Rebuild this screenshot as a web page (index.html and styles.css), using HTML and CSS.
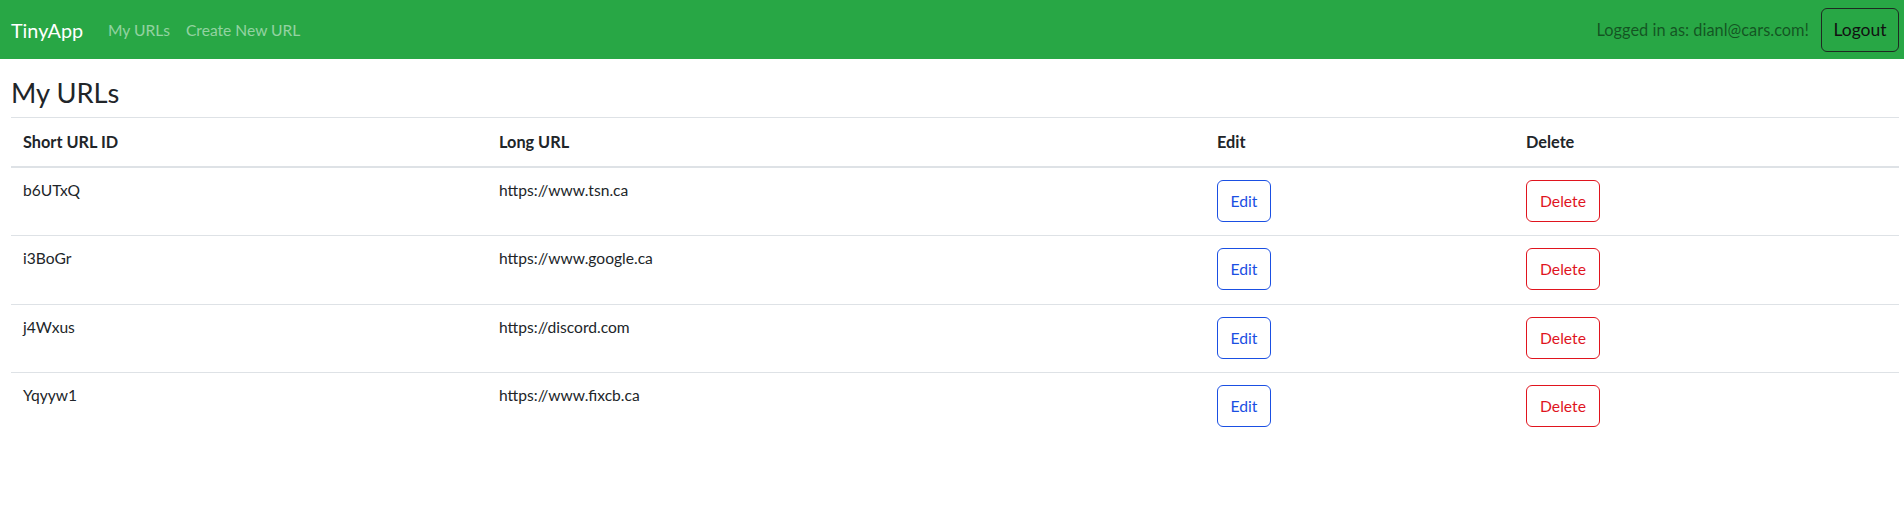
FILE: index.html
```html
<!DOCTYPE html>
<html lang="en">
<head>
<meta charset="utf-8">
<title>TinyApp</title>
<link rel="stylesheet" href="styles.css">
</head>
<body>
<nav class="navbar">
  <a class="brand" href="#">TinyApp</a>
  <ul class="nav">
    <li><a class="nav-link" href="#">My URLs</a></li>
    <li><a class="nav-link" href="#">Create New URL</a></li>
  </ul>
  <div class="user">
    <span class="logged">Logged in as: dianl@cars.com!</span>
    <button class="btn-logout" type="button">Logout</button>
  </div>
</nav>
<main class="content">
  <h3 class="title">My URLs</h3>
  <table class="url-table">
    <colgroup>
      <col class="c1"><col class="c2"><col class="c3"><col class="c4">
    </colgroup>
    <thead>
      <tr><th>Short URL ID</th><th>Long URL</th><th>Edit</th><th>Delete</th></tr>
    </thead>
    <tbody>
      <tr><td>b6UTxQ</td><td>https://www.tsn.ca</td><td class="btn-cell"><button class="btn btn-edit">Edit</button></td><td class="btn-cell"><button class="btn btn-delete">Delete</button></td></tr>
      <tr><td>i3BoGr</td><td>https://www.google.ca</td><td class="btn-cell"><button class="btn btn-edit">Edit</button></td><td class="btn-cell"><button class="btn btn-delete">Delete</button></td></tr>
      <tr><td>j4Wxus</td><td>https://discord.com</td><td class="btn-cell"><button class="btn btn-edit">Edit</button></td><td class="btn-cell"><button class="btn btn-delete">Delete</button></td></tr>
      <tr><td>Yqyyw1</td><td>https://www.fixcb.ca</td><td class="btn-cell"><button class="btn btn-edit">Edit</button></td><td class="btn-cell"><button class="btn btn-delete">Delete</button></td></tr>
    </tbody>
  </table>
</main>
</body>
</html>
```
FILE: styles.css
```css
* { box-sizing: border-box; }
html, body { margin: 0; padding: 0; }
body {
  font-family: "Lato", "Liberation Sans", sans-serif;
  color: #212529;
  background: #fff;
  font-size: 15.6px;
}
.navbar {
  display: flex;
  align-items: center;
  height: 59px;
  padding: 0 5px 0 11px;
  background: #28a745;
}
.brand {
  font-size: 19.8px;
  line-height: 30px;
  color: #fff;
  text-decoration: none;
  margin-right: 25px;
}
.nav {
  display: flex;
  gap: 16px;
  list-style: none;
  margin: 0;
  padding: 0;
}
.nav-link {
  font-size: 15.6px;
  line-height: 26px;
  color: rgba(255, 255, 255, 0.5);
  text-decoration: none;
  display: block;
}
.user {
  margin-left: auto;
  display: flex;
  align-items: center;
  gap: 12px;
}
.logged {
  font-size: 16.4px;
  line-height: 26px;
  color: rgba(0, 0, 0, 0.5);
}
.btn-logout {
  font-family: inherit;
  font-size: 17.5px;
  line-height: 26px;
  width: 78px;
  height: 44px;
  padding: 0;
  background: transparent;
  color: #111;
  border: 1px solid #1e2a22;
  border-radius: 6px;
}
.content {
  padding: 0 5px 0 11px;
}
.title {
  font-size: 27.3px;
  font-weight: 400;
  line-height: 33px;
  margin: 17px 0 8px;
  color: #212529;
}
.url-table {
  width: 100%;
  table-layout: fixed;
  border-collapse: separate;
  border-spacing: 0;
}
.c1 { width: 476px; }
.c2 { width: 718px; }
.c3 { width: 309px; }
.c4 { width: auto; }
.url-table th {
  text-align: left;
  font-weight: 700;
  font-size: 16.3px;
  line-height: 26px;
  padding: 11px 12px;
  border-top: 1px solid #dee2e6;
  border-bottom: 2px solid #dee2e6;
  vertical-align: bottom;
}
.url-table td {
  font-size: 15.6px;
  line-height: 26px;
  padding: 9px 12px;
  vertical-align: top;
  border-top: 1px solid #dee2e6;
}
.url-table tbody tr:first-child td { border-top: 0; }
.url-table td.btn-cell {
  padding: 12px 12px 13.4px;
}
.btn {
  display: block;
  font-family: inherit;
  font-size: 15.7px;
  line-height: 26px;
  height: 42px;
  padding: 0;
  background: #fff;
  border-radius: 6px;
  text-align: center;
}
.btn-edit {
  width: 54px;
  color: #1a4fe3;
  border: 1px solid #1a4fe3;
}
.btn-delete {
  width: 74px;
  color: #e0141e;
  border: 1px solid #e0141e;
}
```
